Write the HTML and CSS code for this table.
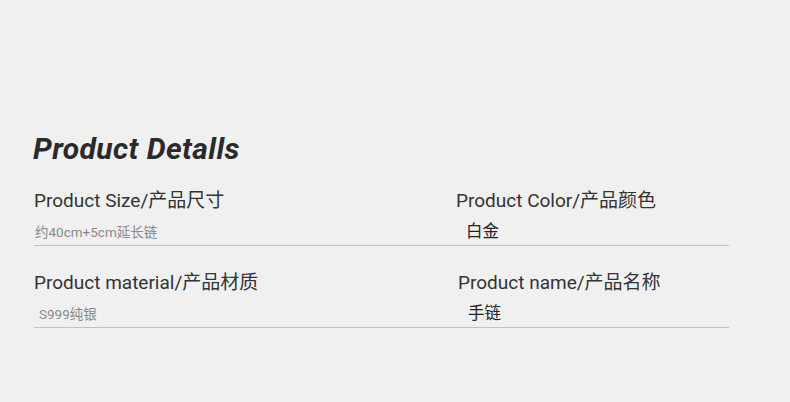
FILE: index.html
```html
<!DOCTYPE html>
<html lang="zh">
<head>
<meta charset="utf-8">
<title>Product Details</title>
<link rel="stylesheet" href="styles.css">
</head>
<body>
<main class="page">
  <h1 class="title">Product Detalls</h1>
  <section class="details">
    <div class="row">
      <div class="cell">
        <div class="label">Product Size/产品尺寸</div>
        <div class="value muted">约40cm+5cm延长链</div>
      </div>
      <div class="cell right">
        <div class="label">Product Color/产品颜色</div>
        <div class="value dark">白金</div>
      </div>
    </div>
    <div class="row second">
      <div class="cell">
        <div class="label">Product material/产品材质</div>
        <div class="value muted inset">S999纯银</div>
      </div>
      <div class="cell right shift">
        <div class="label">Product name/产品名称</div>
        <div class="value dark">手链</div>
      </div>
    </div>
  </section>
</main>
</body>
</html>
```

FILE: styles.css
```css
html, body {
  margin: 0;
  padding: 0;
  background: #f0f0f0;
}

body {
  width: 790px;
  height: 402px;
  overflow: hidden;
  font-family: Roboto, "Noto Sans CJK SC", sans-serif;
  color: #333333;
}

.page {
  padding: 132px 0 0 33px;
}

.title {
  margin: 0 0 23px 0;
  font-family: Roboto, sans-serif;
  font-weight: 700;
  font-style: italic;
  font-size: 30px;
  line-height: 34px;
  color: #2a2a2a;
  letter-spacing: 0.4px;
}

.details {
  width: 695px;
  margin-left: 1px;
}

.row {
  display: grid;
  grid-template-columns: 422px 1fr;
  border-bottom: 1px solid #c2c2c2;
}

.row.second {
  padding-top: 25px;
}

.cell {
  display: flex;
  flex-direction: column;
}

.label {
  font-size: 19px;
  line-height: 24px;
  color: #333333;
  white-space: nowrap;
}

.value {
  margin-top: 6px;
  line-height: 26px;
  white-space: nowrap;
}

.value.muted {
  font-size: 13.5px;
  color: #8a8a8a;
  padding-left: 1px;
}

.value.muted.inset {
  padding-left: 5px;
}

.value.dark {
  font-size: 16.5px;
  color: #222222;
  padding-left: 10px;
}

.cell.shift {
  padding-left: 2px;
}
```
